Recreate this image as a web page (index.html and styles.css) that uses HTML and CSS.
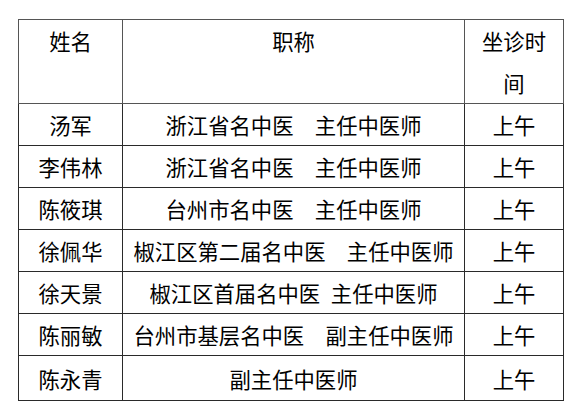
FILE: index.html
```html
<!DOCTYPE html>
<html lang="zh-CN">
<head>
<meta charset="utf-8">
<title>坐诊表</title>
<link rel="stylesheet" href="styles.css">
</head>
<body>
<div class="page">
  <table class="roster">
    <colgroup>
      <col class="c-name">
      <col class="c-title">
      <col class="c-time">
    </colgroup>
    <thead>
      <tr class="head">
        <th>姓名</th>
        <th>职称</th>
        <th class="time">坐诊时间</th>
      </tr>
    </thead>
    <tbody>
      <tr><td>汤军</td><td>浙江省名中医　主任中医师</td><td>上午</td></tr>
      <tr><td>李伟林</td><td>浙江省名中医　主任中医师</td><td>上午</td></tr>
      <tr><td>陈筱琪</td><td>台州市名中医　主任中医师</td><td>上午</td></tr>
      <tr><td>徐佩华</td><td>椒江区第二届名中医　主任中医师</td><td>上午</td></tr>
      <tr><td>徐天景</td><td>椒江区首届名中医<span class="hs"> </span>主任中医师</td><td>上午</td></tr>
      <tr><td>陈丽敏</td><td>台州市基层名中医　副主任中医师</td><td>上午</td></tr>
      <tr class="last"><td>陈永青</td><td>副主任中医师</td><td>上午</td></tr>
    </tbody>
  </table>
</div>
</body>
</html>
```
FILE: styles.css
```css
html, body {
  margin: 0;
  padding: 0;
  background: #ffffff;
}

.page {
  padding: 19px 0 0 18px;
}

.roster {
  border-collapse: collapse;
  table-layout: fixed;
  width: 545px;
  font-family: "Noto Sans CJK SC", "Noto Sans", sans-serif;
  font-size: 16pt;
  color: #000;
}

.c-name { width: 104px; }
.c-title { width: 342px; }
.c-time { width: 99px; }

.roster th,
.roster td {
  border: 1px solid #2a2a2a;
  padding: 0 8px;
  text-align: center;
  font-weight: normal;
  line-height: 41px;
  height: 41px;
  white-space: normal;
}

.roster .head th {
  vertical-align: top;
  line-height: 41.5px;
  height: 83px;
  border-color: #555;
}

.roster .last td {
  height: 44px;
}

.hs {
  display: inline-block;
  width: 0.5em;
}
```
